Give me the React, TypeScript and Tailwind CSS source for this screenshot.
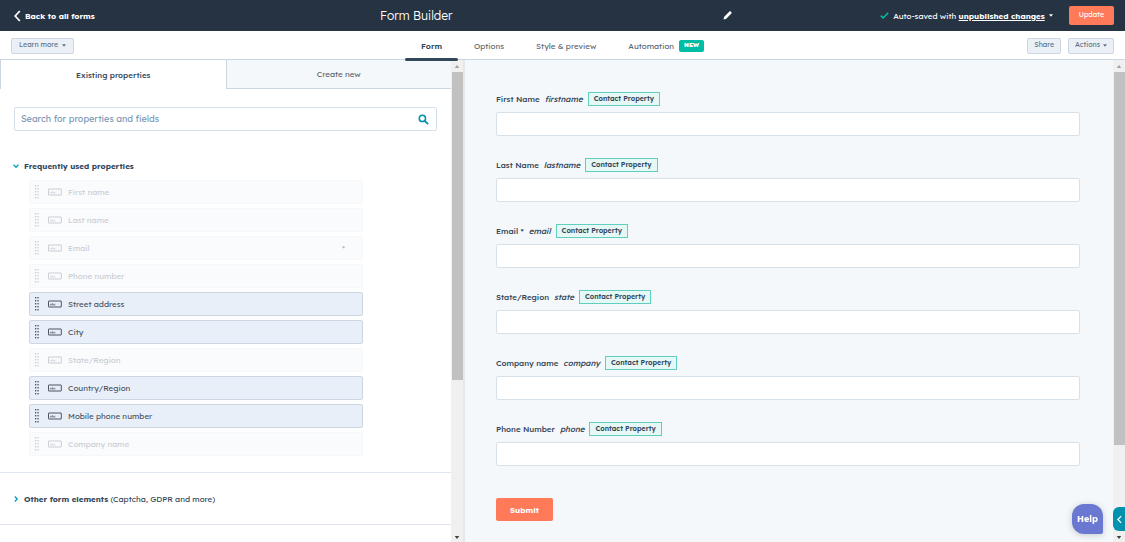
import { useState } from "react";

const properties = [
  { name: "First name", used: true },
  { name: "Last name", used: true },
  { name: "Email", used: true, required: true },
  { name: "Phone number", used: true },
  { name: "Street address" },
  { name: "City" },
  { name: "State/Region", used: true },
  { name: "Country/Region" },
  { name: "Mobile phone number" },
  { name: "Company name", used: true },
];

const fields = [
  { label: "First Name", name: "firstname" },
  { label: "Last Name", name: "lastname" },
  { label: "Email *", name: "email" },
  { label: "State/Region", name: "state" },
  { label: "Company name", name: "company" },
  { label: "Phone Number", name: "phone" },
];

const tabs = ["Form", "Options", "Style & preview", "Automation"];

function Caret({ className }: { className?: string }) {
  return (
    <svg viewBox="0 0 6 4" className={`h-[3px] ${className ?? "w-[4px]"}`} fill="currentColor" aria-hidden="true">
      <path d="M0 0h6L3 4z" />
    </svg>
  );
}

function DragHandle() {
  return (
    <svg viewBox="0 0 4 14" className="h-[14px] w-[4px] shrink-0" fill="currentColor" aria-hidden="true">
      {[0, 3, 6, 9, 12].map((y) => (
        <g key={y}>
          <rect x="0" y={y} width="1.3" height="1.4" />
          <rect x="2.4" y={y} width="1.3" height="1.4" />
        </g>
      ))}
    </svg>
  );
}

function TextFieldIcon() {
  return (
    <svg viewBox="0 0 14 8" className="h-[8px] w-[14px] shrink-0" fill="none" stroke="currentColor" aria-hidden="true">
      <rect x="0.5" y="1" width="12.8" height="6" rx="0.3" />
      <path d="M2.3 5.2v-1h1.2v1zM4.5 3v2.2h1V4.2h-1M7.4 4.2h-.9v1h.9" strokeWidth="0.5" />
    </svg>
  );
}

function Scrollbar({ thumb }: { thumb: string }) {
  return (
    <div className="flex w-3 shrink-0 flex-col bg-[#f0f0f0]" aria-hidden="true">
      <div className="flex h-3 shrink-0 items-center justify-center text-[#a0a0a0]">
        <Caret className="w-[6px] rotate-180" />
      </div>
      <div className="min-h-0 flex-1 pl-px">
        <div className={`bg-[#c1c1c1] ${thumb}`} />
      </div>
      <div className="flex h-[10px] shrink-0 items-center justify-center text-[#404040]">
        <Caret className="w-[6px]" />
      </div>
    </div>
  );
}

export default function App() {
  const [tab, setTab] = useState("Form");
  const [query, setQuery] = useState("");

  return (
    <div className="flex h-screen flex-col overflow-hidden bg-white font-['Lexend_Deca','Inter',sans-serif] text-[8px] text-[#33475b]">
      <header className="grid h-[31px] shrink-0 grid-cols-[380fr_352fr_393fr] items-center bg-[#253342] text-white">
        <a href="#" className="flex items-center gap-1 justify-self-start pl-[14px] font-bold">
          <svg viewBox="0 0 7 12" className="h-3 w-[7px]" fill="none" stroke="currentColor" strokeWidth="1.8" aria-hidden="true">
            <path d="M5.8 1 1.2 6l4.6 5" />
          </svg>
          Back to all forms
        </a>
        <div className="flex items-center justify-between">
          <h1 className="text-[12px] font-light">Form Builder</h1>
          <button aria-label="Edit name">
            <svg viewBox="0 0 9 9" className="size-[9px]" fill="currentColor" aria-hidden="true">
              <path d="M.6 8.4 1 6 5.2 1.8l2 2L3 8zM5.2 1.8l1.2-1.3c.4-.4.9-.4 1.3 0l.7.7c.4.4.4.9 0 1.3L7.2 3.8z" />
            </svg>
          </button>
        </div>
        <div className="flex items-center justify-end pr-[11px] whitespace-nowrap">
          <svg viewBox="0 0 9 7" className="mr-1 h-[7px] w-[9px]" fill="none" stroke="#00bda5" strokeWidth="1.5" aria-hidden="true">
            <path d="M.8 3.6 3.2 6l5-5.2" />
          </svg>
          <span>Auto-saved with&nbsp;</span>
          <button className="flex items-center gap-1 font-bold">
            <span className="underline">unpublished changes</span>
            <Caret />
          </button>
          <button className="ml-4 h-[19px] rounded-xs bg-[#ff7a59] px-[10px] text-[7px]">Update</button>
        </div>
      </header>

      <div className="grid h-[29px] shrink-0 grid-cols-[1fr_auto_1fr] items-center border-b border-[#cbd6e2] px-[11px]">
        <button className="flex h-4 items-center gap-1 justify-self-start rounded-xs border border-[#cbd6e2] bg-[#eaf0f6] px-[7px] text-[7px] text-[#5f7186]">
          Learn more <Caret />
        </button>
        <nav className="flex h-[29px]">
          {tabs.map((t) => (
            <button
              key={t}
              onClick={() => setTab(t)}
              className={
                t === tab
                  ? "relative px-4 font-semibold text-[#33475b] after:absolute after:inset-x-0 after:-bottom-px after:h-[3px] after:rounded-full after:bg-[#33475b]"
                  : "flex items-center gap-[5px] px-4 text-[#5c6670]"
              }
            >
              {t}
              {t === "Automation" && (
                <span className="flex h-3 items-center rounded-xs bg-[#00bda5] px-[5px] text-[6px] font-black text-white">NEW</span>
              )}
            </button>
          ))}
        </nav>
        <div className="flex gap-[7px] justify-self-end text-[7px] text-[#5f7186]">
          <button className="h-4 rounded-xs border border-[#cbd6e2] bg-[#eaf0f6] px-[6px]">Share</button>
          <button className="flex h-4 items-center gap-[3px] rounded-xs border border-[#cbd6e2] bg-[#eaf0f6] px-[6px]">
            Actions <Caret />
          </button>
        </div>
      </div>

      <main className="grid min-h-0 flex-1 grid-cols-[31fr_44fr] grid-rows-1">
        <section className="flex min-h-0 min-w-0 border-r-2 border-[#e3e8ee]">
          <div className="min-w-0 flex-1 overflow-hidden">
            <div className="grid h-[29px] grid-cols-2">
              <button className="border-l border-[#cbd6e2] font-medium">Existing properties</button>
              <button className="border-b border-l border-[#cbd6e2] bg-[#f5f8fa] text-[#5c6670]">Create new</button>
            </div>

            <div className="mx-[14px] mt-[18px] flex h-6 items-center rounded-xs border border-[#d5dfe9] px-[6px]">
              <input
                type="text"
                aria-label="Search for properties and fields"
                placeholder="Search for properties and fields"
                value={query}
                onChange={(e) => setQuery(e.target.value)}
                className="min-w-0 flex-1 text-[9px] outline-none placeholder:text-[#7c98b6]"
              />
              <svg viewBox="0 0 12 12" className="mr-px size-[11px]" fill="none" stroke="#0091ae" aria-hidden="true">
                <circle cx="4.8" cy="4.8" r="3.4" strokeWidth="1.7" />
                <path d="m7.4 7.4 3.6 3.6" strokeWidth="2" />
              </svg>
            </div>

            <div className="border-b border-[#dfe6ed] pt-7 pb-4">
              <button className="flex h-[14px] items-center gap-[5px] pl-[13px] font-bold">
                <svg viewBox="0 0 6 6" className="size-[6px]" fill="none" stroke="#00a4bd" strokeWidth="1.4" aria-hidden="true">
                  <path d="M.6 1.8 3 4.2l2.4-2.4" />
                </svg>
                Frequently used properties
              </button>
              <ul className="mt-[7px] mr-[88px] ml-[29px] flex flex-col gap-1">
                {properties.map((p) => (
                  <li
                    key={p.name}
                    className={
                      p.used
                        ? "flex h-6 items-center rounded-xs border border-[#f5f8fa] bg-[#fafbfd] px-[5px] text-[#c9ced4]"
                        : "flex h-6 items-center rounded-xs border border-[#cbd6e2] bg-[#e9eff8] px-[5px] text-[#4a5563]"
                    }
                  >
                    <DragHandle />
                    <span className="ml-[9px] flex">
                      <TextFieldIcon />
                    </span>
                    <span className="ml-[6px]">{p.name}</span>
                    {p.required && <span className="mr-3 ml-auto text-[#a9b1ba]">*</span>}
                  </li>
                ))}
              </ul>
            </div>

            <div className="border-b border-[#dfe6ed]">
              <button className="flex h-[51px] items-center gap-[5px] pl-[13px]">
                <svg viewBox="0 0 6 6" className="size-[6px]" fill="none" stroke="#00a4bd" strokeWidth="1.4" aria-hidden="true">
                  <path d="M1.8.6 4.2 3 1.8 5.4" />
                </svg>
                <span>
                  <b className="font-bold">Other form elements</b> (Captcha, GDPR and more)
                </span>
              </button>
            </div>
          </div>
          <Scrollbar thumb="h-[67%]" />
        </section>

        <section className="flex min-h-0 min-w-0 bg-[#f5f8fa]">
          <form className="min-w-0 flex-1 overflow-hidden pt-8 pr-[33px] pl-[31px]" onSubmit={(e) => e.preventDefault()}>
            <div className="flex flex-col gap-[22px]">
              {fields.map((f) => (
                <div key={f.name} className="flex flex-col gap-[6px]">
                  <label htmlFor={f.name} className="flex h-[14px] items-center font-medium">
                    {f.label}
                    <i className="ml-[5px]">{f.name}</i>
                    <span className="ml-[5px] flex h-[14px] items-center border border-[#5fd0c0] bg-[#e5f8f6] px-[5px] text-[7px] font-semibold">
                      Contact Property
                    </span>
                  </label>
                  <input id={f.name} type="text" className="h-6 w-full rounded-xs border border-[#d8e0e8] bg-white px-2 outline-none" />
                </div>
              ))}
            </div>
            <button className="mt-8 h-[23px] rounded-xs bg-[#ff7a59] px-[14px] font-bold text-white">Submit</button>
          </form>
          <Scrollbar thumb="h-[81%]" />
        </section>
      </main>

      {/* floating widgets */}
      <button className="fixed right-[22px] bottom-2 h-[30px] w-[31px] rounded-xl rounded-br-xs bg-[#6a78d1] text-[9px] font-bold text-white shadow-[0_1px_6px_rgba(45,62,80,0.25)]">
        Help
      </button>
      <button
        aria-label="Open panel"
        className="fixed right-0 bottom-[11px] flex h-6 w-3 items-center justify-center rounded-l-md bg-[#0091ae] text-white"
      >
        <svg viewBox="0 0 6 10" className="h-[9px] w-[5px]" fill="none" stroke="currentColor" strokeWidth="1.5" aria-hidden="true">
          <path d="M5 1 1 5l4 4" />
        </svg>
      </button>
    </div>
  );
}
